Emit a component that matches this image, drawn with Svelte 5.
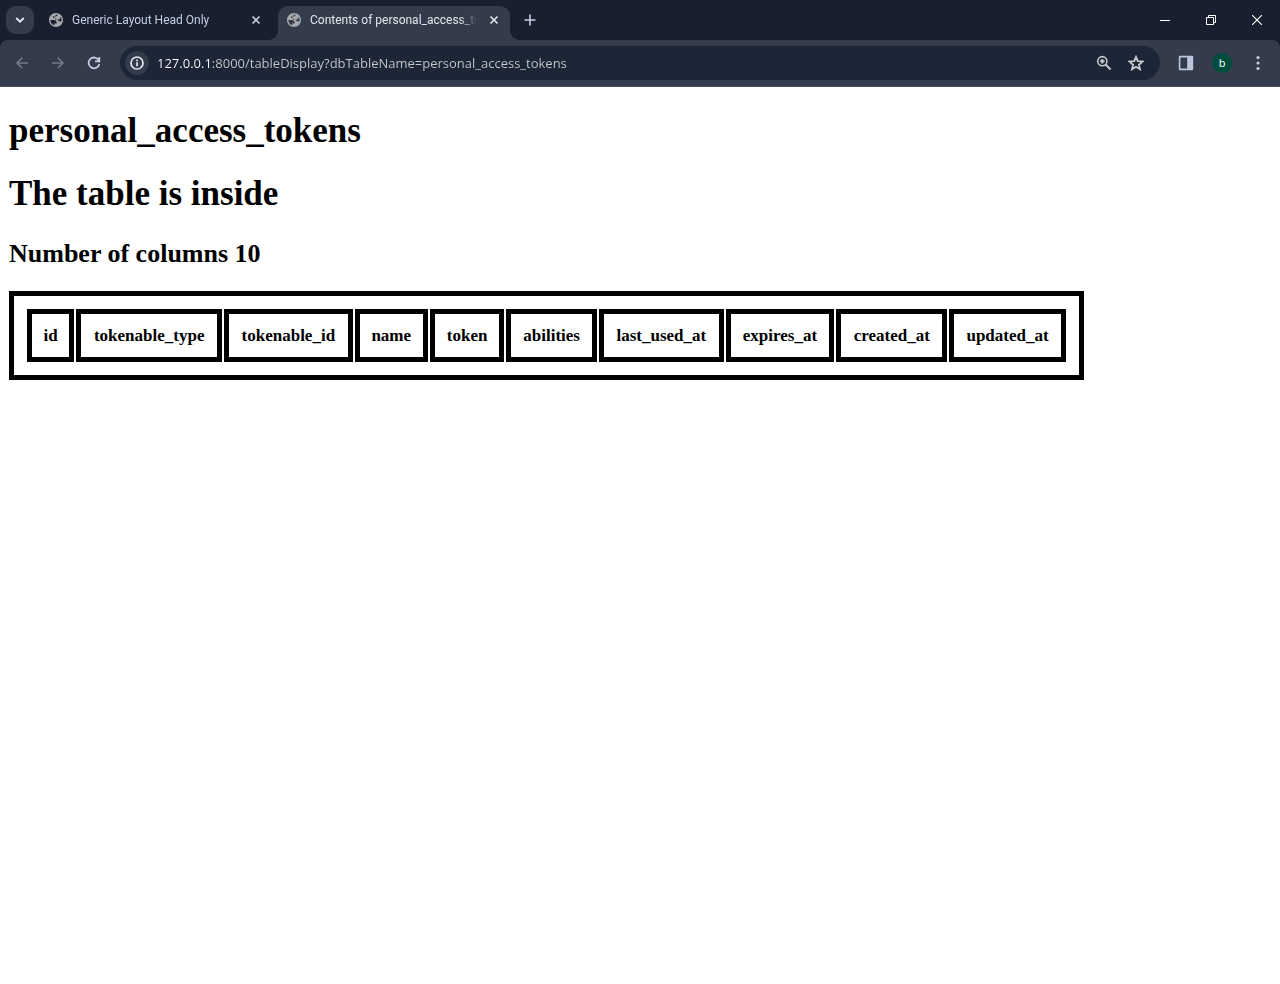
<script>
  const columns = ['id', 'tokenable_type', 'tokenable_id', 'name', 'token', 'abilities', 'last_used_at', 'expires_at', 'created_at', 'updated_at'];
  const tabs = [
    { title: 'Generic Layout Head Only', active: false },
    { title: 'Contents of personal_access_tokens', active: true }
  ];
  let address = $state('127.0.0.1:8000/tableDisplay?dbTableName=personal_access_tokens');
</script>

<header class="browser">
  <div class="tabstrip">
    <button class="tab-search" aria-label="Search tabs">
      <svg width="12" height="12" viewBox="0 0 12 12"><path d="M2.2 4 6 7.700l3.800-3.700" fill="none" stroke="currentColor" stroke-width="1.800" /></svg>
    </button>
    <div class="tabs">
      {#each tabs as tab}
        <div class="tab" class:active={tab.active}>
          <svg class="globe" width="14" height="14" viewBox="2 2 20 20"><path fill="currentColor" d="M12 2C6.480 2 2 6.480 2 12s4.480 10 10 10 10-4.480 10-10S17.520 2 12 2zM4 12h4.400c3.407.022 4.922 1.730 4.543 5.127H9.488v2.470A8.004 8.004 0 0 1 4 12zm10-7.745v.5c0 1.200-1 2.100-2.300 2.100H9.700v2.300c1.500 0 2.600.7 2.600 2.300h3.500c1.500 0 2.200-1.100 2.200-2.600V8.200h.99A7.960 7.960 0 0 1 20 12c0 .6-.1 1.200-.2 1.800-2.800.7-4.800-.2-5.200-2.100H11V9.200H8V6.800h3c0-1.600.9-2.600 3-2.545z" /></svg>
          <button class="title">{tab.title}</button>
          <button class="close" aria-label="Close tab">
            <svg width="10" height="10" viewBox="0 0 10 10"><path d="m1.500 1.500 7 7m0-7-7 7" stroke="currentColor" stroke-width="1.600" /></svg>
          </button>
        </div>
      {/each}
    </div>
    <button class="new-tab" aria-label="New tab">
      <svg width="12" height="12" viewBox="0 0 12 12"><path d="M6 .5v11M.5 6h11" stroke="currentColor" stroke-width="1.600" /></svg>
    </button>
    <div class="window-controls">
      <button aria-label="Minimize"><svg width="10" height="10" viewBox="0 0 10 10"><path d="M0 5.500h10" stroke="currentColor" /></svg></button>
      <button aria-label="Restore"><svg width="10" height="10" viewBox="0 0 10 10"><path d="M.5 2.500h7v7h-7zM2.500 2.500v-2h7v7h-2" fill="none" stroke="currentColor" /></svg></button>
      <button aria-label="Close window"><svg width="10" height="10" viewBox="0 0 10 10"><path d="m0 0 10 10M10 0 0 10" stroke="currentColor" stroke-width="1.200" /></svg></button>
    </div>
  </div>

  <div class="toolbar">
    <div class="nav">
      <button class="dim" aria-label="Back"><svg width="16" height="16" viewBox="0 0 16 16"><path d="M14 8H3m5.300-5.300L3 8l5.300 5.300" fill="none" stroke="currentColor" stroke-width="1.600" /></svg></button>
      <button class="dim" aria-label="Forward"><svg width="16" height="16" viewBox="0 0 16 16"><path d="M2 8h11M7.700 2.700 13 8l-5.300 5.300" fill="none" stroke="currentColor" stroke-width="1.600" /></svg></button>
      <button aria-label="Reload"><svg width="16" height="16" viewBox="0 0 16 16"><path d="M12.700 5.200A5.400 5.400 0 1 0 13.300 9M13.300 2v4.300H9" fill="none" stroke="currentColor" stroke-width="1.800" /></svg></button>
    </div>
    <div class="omnibox">
      <button class="info" aria-label="View site information">
        <svg width="16" height="16" viewBox="0 0 16 16"><circle cx="8" cy="8" r="6" fill="none" stroke="currentColor" stroke-width="1.700" /><path d="M8 7.200v4M8 4.500v1.700" stroke="currentColor" stroke-width="1.700" /></svg>
      </button>
      <input type="text" aria-label="Address" bind:value={address} spellcheck="false" />
      <button class="page-action" aria-label="Zoom">
        <svg width="16" height="16" viewBox="0 0 16 16"><circle cx="6.300" cy="6.200" r="4.600" fill="none" stroke="currentColor" stroke-width="1.600" /><path d="m9.600 9.500 5 5" stroke="currentColor" stroke-width="1.900" /><path d="M6.300 4v4.400M4.100 6.200h4.400" stroke="currentColor" stroke-width="1.900" /></svg>
      </button>
      <button class="page-action" aria-label="Bookmark this page">
        <svg width="16" height="16" viewBox="0 0 16 16"><path d="m8 1.900 1.800 4.300 4.700.4-3.600 3.100 1.100 4.600L8 11.800l-4 2.500 1.100-4.600-3.600-3.100 4.700-.4z" fill="none" stroke="currentColor" stroke-width="1.800" /></svg>
      </button>
    </div>
    <div class="actions">
      <button aria-label="Side panel"><svg width="16" height="16" viewBox="0 0 16 16"><path fill="currentColor" fill-rule="evenodd" d="M2 .8h12a1.200 1.200 0 0 1 1.200 1.200v12a1.200 1.200 0 0 1-1.200 1.200H2A1.200 1.200 0 0 1 .8 14V2A1.200 1.200 0 0 1 2 .8zm.4 1.700v11h6.800v-11z" /></svg></button>
      <button aria-label="Profile b"><span class="avatar">b</span></button>
      <button aria-label="Menu"><svg width="16" height="16" viewBox="0 0 16 16" fill="currentColor"><circle cx="8" cy="2.500" r="1.600" /><circle cx="8" cy="8" r="1.600" /><circle cx="8" cy="13.500" r="1.600" /></svg></button>
    </div>
  </div>
</header>

<main>
  <h1>personal_access_tokens</h1>
  <h1>The table is inside</h1>
  <h2>Number of columns {columns.length}</h2>
  <table>
    <thead>
      <tr>
        {#each columns as column}
          <th scope="col">{column}</th>
        {/each}
      </tr>
    </thead>
  </table>
</main>

<style>
  :global(body) {
    margin: 0;
    background: #fff;
  }

  .browser {
    background: #182030;
    color: #c5cde0;
    font-family: "Open Sans", "Noto Sans", sans-serif;
  }

  button {
    display: flex;
    align-items: center;
    justify-content: center;
    flex: none;
    margin: 0;
    padding: 0;
    border: 0;
    background: none;
    color: inherit;
    font: inherit;
  }

  .tabstrip {
    display: flex;
    height: 40px;
  }

  .tab-search {
    width: 28px;
    height: 28px;
    margin: 6px 6px 0;
    border-radius: 10px;
    background: #343c4c;
    color: #e4e8f2;
  }

  .tabs {
    display: flex;
    gap: 6px;
    padding-top: 6px;
  }

  .tab {
    position: relative;
    display: flex;
    align-items: center;
    gap: 9px;
    box-sizing: border-box;
    width: 232px;
    height: 34px;
    padding: 0 8px 6px 9px;
    border-radius: 10px 10px 0 0;
    font-family: Roboto, "Open Sans", sans-serif;
    font-size: 12px;
  }

  .tab.active {
    background: #343c4c;
    color: #e4e6ec;
  }

  .tab.active::before,
  .tab.active::after {
    content: "";
    position: absolute;
    bottom: 0;
    width: 10px;
    height: 10px;
  }

  .tab.active::before {
    right: 100%;
    background: radial-gradient(circle at 0 0, transparent 10px, #343c4c 10px);
  }

  .tab.active::after {
    left: 100%;
    background: radial-gradient(circle at 100% 0, transparent 10px, #343c4c 10px);
  }

  .globe {
    flex: none;
    color: #a5a7ab;
  }

  .title {
    flex: 1;
    min-width: 0;
    justify-content: flex-start;
    overflow: hidden;
    white-space: nowrap;
    mask-image: linear-gradient(to left, transparent, #000 18px);
  }

  .close {
    width: 16px;
    height: 16px;
  }

  .new-tab {
    width: 28px;
    height: 28px;
    margin: 6px;
  }

  .window-controls {
    display: flex;
    margin-left: auto;
    color: #fff;
  }

  .window-controls button {
    width: 46px;
  }

  .toolbar {
    display: flex;
    align-items: center;
    gap: 8px;
    height: 46px;
    padding: 0 4px;
    border-bottom: 1px solid #474c56;
    border-radius: 8px 8px 0 0;
    background: #343c4c;
  }

  .nav,
  .actions {
    display: flex;
  }

  .nav button,
  .actions button {
    width: 36px;
    height: 34px;
  }

  .actions button:first-child svg {
    color: #bcc6dc;
  }

  .nav .dim {
    color: #747b8c;
  }

  .omnibox {
    display: flex;
    align-items: center;
    flex: 1;
    height: 34px;
    padding: 0 8px 0 5px;
    border-radius: 17px;
    background: #1d2636;
  }

  .info {
    width: 24px;
    height: 24px;
    border-radius: 50%;
    background: #343c4c;
    color: #e4e6ec;
  }

  input {
    flex: 1;
    min-width: 0;
    height: 28px;
    margin: 0 0 0 8px;
    padding: 0;
    border: 0;
    outline: 0;
    background: linear-gradient(90deg, #fff 54px, #c6c8cd 54px) text;
    color: transparent;
    caret-color: #fff;
    font-family: inherit;
    font-size: 13px;
  }

  .page-action {
    width: 32px;
    height: 28px;
    color: #c7c9cd;
  }

  .avatar {
    width: 20px;
    height: 20px;
    border-radius: 50%;
    background: #004d40;
    color: #fff;
    font-size: 11px;
    line-height: 20px;
  }

  main {
    padding: 0 9px 9px;
    overflow: hidden;
    color: #000;
    font-family: "Liberation Serif", "Times New Roman", serif;
  }

  h1 {
    margin: 24px 0;
    font-size: 35px;
    line-height: 39px;
  }

  h2 {
    margin: 26px 0 22px;
    font-size: 26px;
    line-height: 30px;
  }

  table,
  th {
    padding: 11px;
    border: 5px solid #000;
  }

  table {
    width: 1075px;
    border-spacing: 2px;
  }

  th {
    font-size: 17px;
    line-height: 21px;
  }
</style>
